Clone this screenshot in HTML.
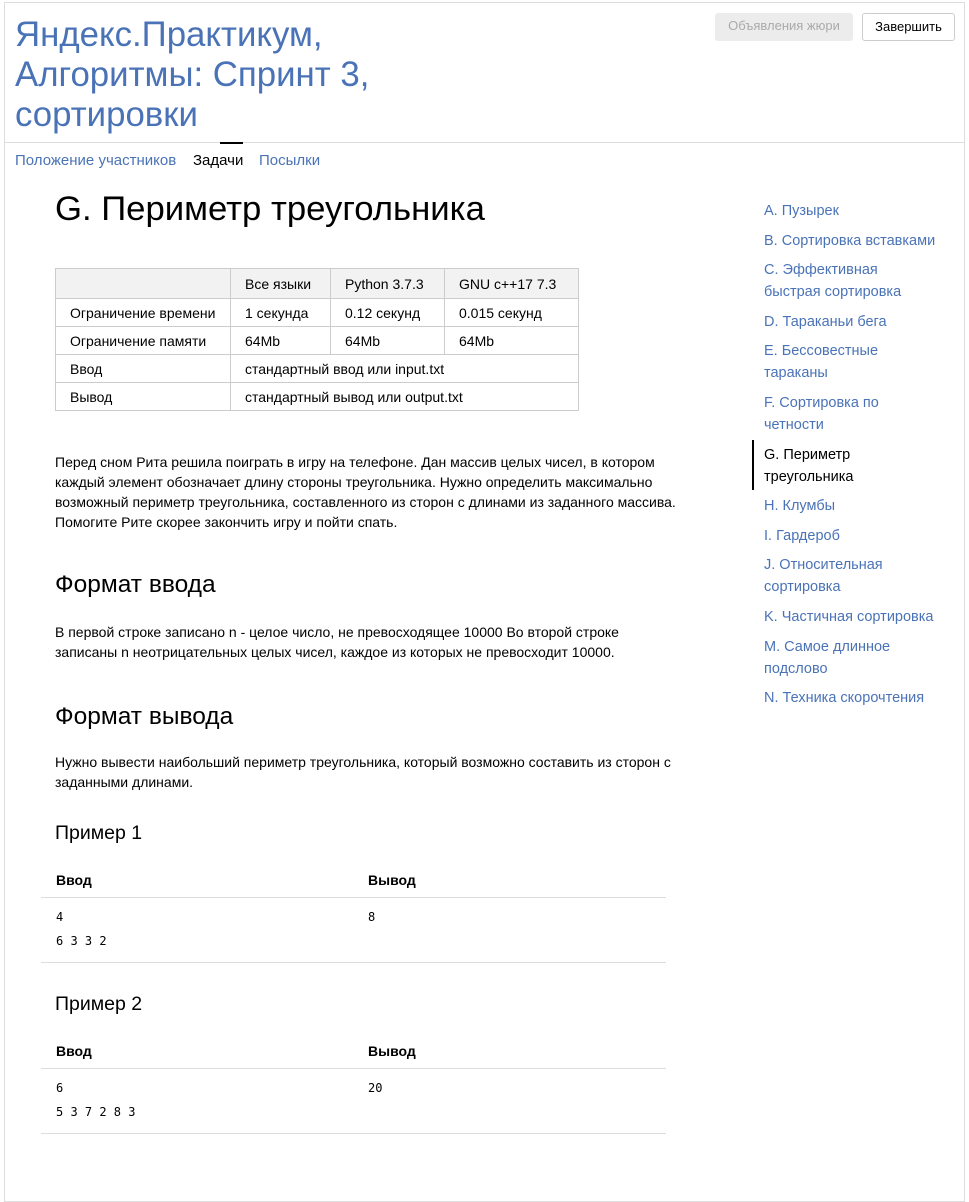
<!DOCTYPE html>
<html><head><meta charset="utf-8"><style>
*{margin:0;padding:0;box-sizing:border-box}
body{width:969px;height:1141px;background:#fff;font-family:"Liberation Sans",Arial,sans-serif;color:#000;position:relative;overflow:hidden}
.frame{position:absolute;left:4px;top:2px;width:961px;height:1200px;border:1px solid #ddd}
.a{position:absolute}
.title{left:15px;top:15px;font-size:34.8px;line-height:40px;color:#4a73b7}
.hdrline{left:5px;top:142px;width:959px;height:1px;background:#ddd}
.tabs{top:152px;font-size:15px;line-height:18px;color:#4a73b7}
.btn{top:13px;height:28px;font-size:13px;line-height:26px;text-align:center;border-radius:3px}
h1{font-weight:normal;font-size:34.7px;line-height:38px}
h2{font-weight:normal;font-size:24.5px;line-height:28px}
h3{font-weight:normal;font-size:19.5px;line-height:24px}
p{font-size:14px;line-height:20px}
table{border-collapse:collapse;font-size:14px}
td{border:1px solid #ccc;padding:0 14px;height:28px}
tr.h td{background:#f2f2f2;height:30px}
.side{left:764px;top:200px;font-size:14.5px;line-height:22px;color:#4a73b7;width:190px}
.side div{margin-bottom:7.6px}
.side .act{color:#000}
.ex{left:41px;width:625px;font-size:14px}
.ex .head{font-weight:bold;height:36px;border-bottom:1px solid #ddd;position:relative}
.ex .body{position:relative;height:65px;border-bottom:1px solid #ddd;font-family:"DejaVu Sans Mono","Liberation Mono",monospace;font-size:12px;line-height:24px}
</style></head><body>
<div class="frame"></div>
<div class="a title">Яндекс.Практикум,<br>Алгоритмы: Спринт 3,<br>сортировки</div>
<div class="a btn" style="left:715px;width:138px;background:#ececec;color:#aaa">Объявления жюри</div>
<div class="a btn" style="left:862px;width:93px;border:1px solid #ccc;color:#000">Завершить</div>
<div class="a hdrline"></div>
<div class="a" style="left:220px;top:142px;width:23px;height:2px;background:#000"></div>
<div class="a tabs" style="left:15px">Положение участников</div>
<div class="a tabs" style="left:193px;color:#000">Задачи</div>
<div class="a tabs" style="left:259px">Посылки</div>

<h1 class="a" style="left:55px;top:190px">G. Периметр треугольника</h1>
<table class="a" style="left:55px;top:268px;width:524px">
<tr class="h"><td style="width:175px"></td><td style="width:100px">Все языки</td><td style="width:114px">Python 3.7.3</td><td>GNU c++17 7.3</td></tr>
<tr><td>Ограничение времени</td><td>1 секунда</td><td>0.12 секунд</td><td>0.015 секунд</td></tr>
<tr><td>Ограничение памяти</td><td>64Mb</td><td>64Mb</td><td>64Mb</td></tr>
<tr><td>Ввод</td><td colspan="3">стандартный ввод или input.txt</td></tr>
<tr><td>Вывод</td><td colspan="3">стандартный вывод или output.txt</td></tr>
</table>
<p class="a" style="left:55px;top:452px;width:640px">Перед сном Рита решила поиграть в игру на телефоне. Дан массив целых чисел, в котором каждый элемент обозначает длину стороны треугольника. Нужно определить максимально возможный периметр треугольника, составленного из сторон с длинами из заданного массива. Помогите Рите скорее закончить игру и пойти спать.</p>
<h2 class="a" style="left:55px;top:571px">Формат ввода</h2>
<p class="a" style="left:55px;top:622px;width:620px">В первой строке записано n - целое число, не превосходящее 10000 Во второй строке записаны n неотрицательных целых чисел, каждое из которых не превосходит 10000.</p>
<h2 class="a" style="left:55px;top:703px">Формат вывода</h2>
<p class="a" style="left:55px;top:752px;width:630px">Нужно вывести наибольший периметр треугольника, который возможно составить из сторон с заданными длинами.</p>
<h3 class="a" style="left:55px;top:821px">Пример 1</h3>
<div class="a ex" style="top:862px">
<div class="head"><span class="a" style="left:15px;top:10px">Ввод</span><span class="a" style="left:327px;top:10px">Вывод</span></div>
<div class="body"><span class="a" style="left:15px;top:7px">4<br>6 3 3 2</span><span class="a" style="left:327px;top:7px">8</span></div>
</div>
<h3 class="a" style="left:55px;top:992px">Пример 2</h3>
<div class="a ex" style="top:1033px">
<div class="head"><span class="a" style="left:15px;top:10px">Ввод</span><span class="a" style="left:327px;top:10px">Вывод</span></div>
<div class="body"><span class="a" style="left:15px;top:7px">6<br>5 3 7 2 8 3</span><span class="a" style="left:327px;top:7px">20</span></div>
</div>

<div class="a" style="left:752px;top:440px;width:2px;height:50px;background:#000"></div>
<div class="a side">
<div>A. Пузырек</div>
<div>B. Сортировка вставками</div>
<div>C. Эффективная<br>быстрая сортировка</div>
<div>D. Тараканьи бега</div>
<div>E. Бессовестные<br>тараканы</div>
<div>F. Сортировка по<br>четности</div>
<div class="act">G. Периметр<br>треугольника</div>
<div>H. Клумбы</div>
<div>I. Гардероб</div>
<div>J. Относительная<br>сортировка</div>
<div>K. Частичная сортировка</div>
<div>M. Самое длинное<br>подслово</div>
<div>N. Техника скорочтения</div>
</div>
</body></html>
